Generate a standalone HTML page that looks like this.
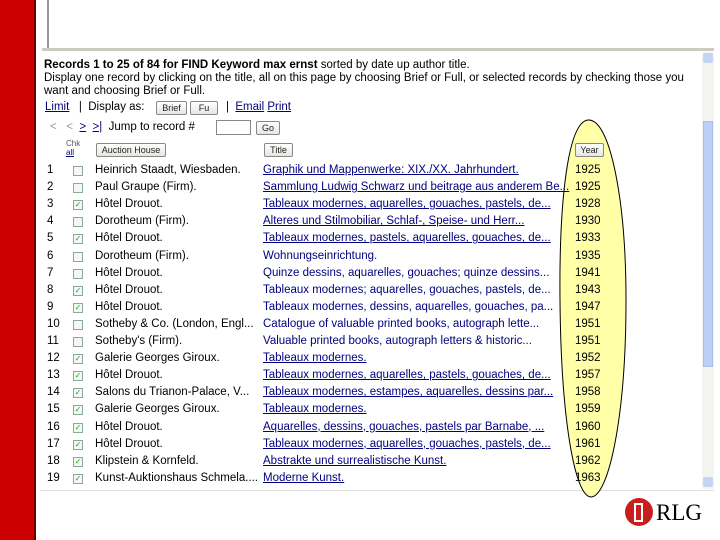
<!DOCTYPE html>
<html><head><meta charset="utf-8"><style>
body{margin:0;width:720px;height:540px;background:#fff;position:relative;overflow:hidden;font-family:"Liberation Sans",sans-serif;font-size:11.5px;color:#000}
.a{position:absolute;white-space:nowrap;line-height:13px}
.l{color:#000080;text-decoration:underline}
.t{color:#000080}
.btn{position:absolute;border:1px solid #888;border-radius:2px;background:linear-gradient(#fff,#e6e6e0);font-size:9px;line-height:12px;height:12px;text-align:center;color:#222}
.cb{position:absolute;width:8px;height:8px;border:1px solid #8a9;background:#f6f6f6;font-size:8px;line-height:8px;color:#2a2;text-align:center}
</style></head><body>
<div style="position:absolute;left:0;top:0;width:34px;height:540px;background:#cc0000;border-right:2px solid #600"></div>
<div style="position:absolute;left:47px;top:0;width:2px;height:48px;background:#999"></div>
<div style="position:absolute;left:42px;top:48px;width:672px;height:3px;background:#cdcbc0"></div>
<div style="position:absolute;left:40px;top:490px;width:674px;height:1px;background:#ddd"></div>
<div style="position:absolute;left:702px;top:52px;width:12px;height:437px;background:#f4f4f0"></div>
<div style="position:absolute;left:703px;top:53px;width:10px;height:10px;background:#c4d4f4;border-radius:2px"></div>
<div style="position:absolute;left:703px;top:121px;width:10px;height:246px;background:#bcd0f6;border:1px solid #a8bde8;box-sizing:border-box"></div>
<div style="position:absolute;left:703px;top:477px;width:10px;height:10px;background:#c4d4f4;border-radius:2px"></div>
<svg style="position:absolute;left:0;top:0" width="720" height="540"><path d="M588 120 C568 122 559 200 560 300 C561 420 575 497 591 497 C608 497 626 420 626 300 C626 200 610 118 588 120Z" fill="#ffffa8" stroke="#000" stroke-width="1"/></svg>
<div class="a" style="left:44px;top:59px;font-weight:bold">Records 1 to 25 of 84 for FIND Keyword max ernst <span style="font-weight:normal">sorted by date up author title.</span></div>
<div class="a" style="left:44px;top:72px">Display one record by clicking on the title, all on this page by choosing Brief or Full, or selected records by checking those you</div>
<div class="a" style="left:44px;top:85px">want and choosing Brief or Full.</div>
<div class="a" style="left:45px;top:101px"><span class="l">Limit</span> &nbsp; | &nbsp;Display as:</div>
<div class="btn" style="left:156px;top:101px;width:29px">Brief</div>
<div class="btn" style="left:190px;top:101px;width:26px">Fu</div>
<div class="a" style="left:226px;top:101px">| &nbsp;<span class="l">Email</span> <span class="l">Print</span></div>
<div class="a" style="left:50px;top:121px;color:#999">&lt; &nbsp; &lt; &nbsp;<span class="l" style="color:#000080">&gt;</span> &nbsp;<span class="l" style="color:#000080">&gt;|</span> &nbsp;<span style="color:#000">Jump to record #</span></div>
<div style="position:absolute;left:216px;top:120px;width:33px;height:13px;border:1px solid #888"></div>
<div class="btn" style="left:256px;top:121px;width:22px">Go</div>
<div class="a" style="left:66px;top:139px;font-size:8px;line-height:9px;color:#555">Chk<br><span class="l">all</span></div>
<div class="btn" style="left:96px;top:143px;width:68px">Auction House</div>
<div class="btn" style="left:264px;top:143px;width:27px">Title</div>
<div class="btn" style="left:575px;top:143px;width:27px">Year</div>
<div id="rows"></div>
<script>
var r=[["Heinrich Staadt, Wiesbaden.","Graphik und Mappenwerke: XIX./XX. Jahrhundert.",1925,0,1],
["Paul Graupe (Firm).","Sammlung Ludwig Schwarz und beitrage aus anderem Be...",1925,0,1],
["Hôtel Drouot.","Tableaux modernes, aquarelles, gouaches, pastels, de...",1928,1,1],
["Dorotheum (Firm).","Alteres und Stilmobiliar, Schlaf-, Speise- und Herr...",1930,0,1],
["Hôtel Drouot.","Tableaux modernes, pastels, aquarelles, gouaches, de...",1933,1,1],
["Dorotheum (Firm).","Wohnungseinrichtung.",1935,0,0],
["Hôtel Drouot.","Quinze dessins, aquarelles, gouaches; quinze dessins...",1941,0,0],
["Hôtel Drouot.","Tableaux modernes; aquarelles, gouaches, pastels, de...",1943,1,0],
["Hôtel Drouot.","Tableaux modernes, dessins, aquarelles, gouaches, pa...",1947,1,0],
["Sotheby & Co. (London, Engl...","Catalogue of valuable printed books, autograph lette...",1951,0,0],
["Sotheby's (Firm).","Valuable printed books, autograph letters & historic...",1951,0,0],
["Galerie Georges Giroux.","Tableaux modernes.",1952,1,1],
["Hôtel Drouot.","Tableaux modernes, aquarelles, pastels, gouaches, de...",1957,1,1],
["Salons du Trianon-Palace, V...","Tableaux modernes, estampes, aquarelles, dessins par...",1958,1,1],
["Galerie Georges Giroux.","Tableaux modernes.",1959,1,1],
["Hôtel Drouot.","Aquarelles, dessins, gouaches, pastels par Barnabe, ...",1960,1,1],
["Hôtel Drouot.","Tableaux modernes, aquarelles, gouaches, pastels, de...",1961,1,1],
["Klipstein & Kornfeld.","Abstrakte und surrealistische Kunst.",1962,1,1],
["Kunst-Auktionshaus Schmela....","Moderne Kunst.",1963,1,1]];
var h="";
r.forEach(function(x,i){var y=164+i*17.1;
h+='<div class="a" style="left:47px;top:'+y+'px">'+(i+1)+'</div>';
h+='<div class="cb" style="left:73px;top:'+(y+2)+'px">'+(x[3]?'&#10003;':'')+'</div>';
h+='<div class="a" style="left:95px;top:'+y+'px">'+x[0]+'</div>';
h+='<div class="a '+(x[4]?'l':'t')+'" style="left:263px;top:'+y+'px">'+x[1]+'</div>';
h+='<div class="a" style="left:575px;top:'+y+'px">'+x[2]+'</div>';});
document.getElementById("rows").innerHTML=h;
</script>
<svg style="position:absolute;left:624px;top:497px" width="32" height="32"><circle cx="15" cy="15" r="14" fill="#c81e1e"/><rect x="10" y="6" width="9" height="19" fill="#fff"/><rect x="12" y="8" width="5" height="15" fill="#c81e1e"/></svg>
<div class="a" style="left:656px;top:499px;font-family:'Liberation Serif',serif;font-size:23px;line-height:28px">RLG</div>
</body></html>
